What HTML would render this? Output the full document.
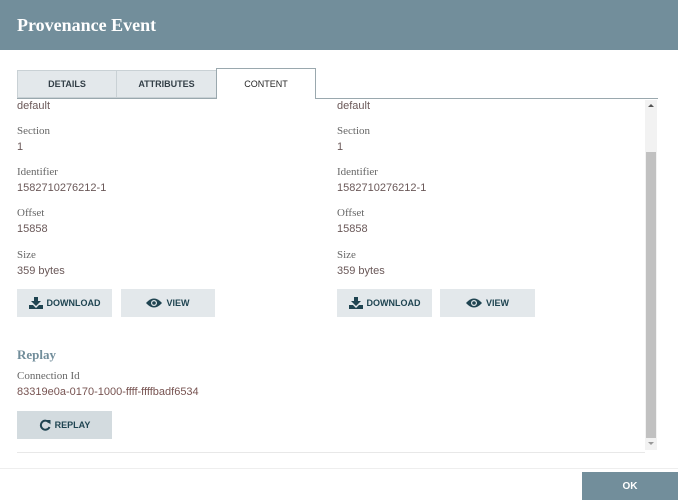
<!DOCTYPE html>
<html><head><style>
*{margin:0;padding:0;box-sizing:border-box}
body{width:678px;height:500px;background:#fff;position:relative;overflow:hidden;font-family:"Liberation Sans",sans-serif}
.hdr{position:absolute;left:0;top:0;width:678px;height:50px;background:#728e9b}
.hdr span{position:absolute;left:17px;top:15px;color:#fff;font-family:"Liberation Serif",serif;font-weight:bold;font-size:18px}
.tab{position:absolute;top:70px;height:28px;background:#e3e8eb;border:1px solid #c9d1d5;font-size:9px;font-weight:bold;color:#333f47;text-align:center;line-height:27px}
.tab.act{top:68px;height:31px;background:#fff;border:1px solid #9aa8ae;border-bottom:none;color:#262626;font-weight:normal;line-height:31px}
.line{position:absolute;left:17px;top:98px;width:641px;height:1px;background:#9aa8ae}
.t{position:absolute;font-size:11px;white-space:nowrap}
.l{font-family:"Liberation Serif",serif;color:#666}
.v{color:#6a5858}
.btn{position:absolute;height:28px;background:#e3e8eb;font-size:9px;font-weight:bold;color:#1f4451;display:flex;align-items:center;justify-content:center;gap:4px}
.sb{position:absolute;left:645px;top:100px;width:12px;height:350px;background:#f2f2f2}
.th{position:absolute;left:646px;top:152px;width:10px;height:286px;background:#c1c1c1}
</style></head><body>
<div class="hdr"><span>Provenance Event</span></div>
<div class="tab" style="left:17px;width:100px">DETAILS</div>
<div class="tab" style="left:116px;width:101px">ATTRIBUTES</div>
<div class="line"></div>
<div class="tab act" style="left:216px;width:100px">CONTENT</div>

<div class="t v" style="left:17px;top:100px">default</div>
<div class="t l" style="left:17px;top:125px">Section</div>
<div class="t v" style="left:17px;top:141px">1</div>
<div class="t l" style="left:17px;top:166px">Identifier</div>
<div class="t v" style="left:17px;top:182px">1582710276212-1</div>
<div class="t l" style="left:17px;top:207px">Offset</div>
<div class="t v" style="left:17px;top:223px">15858</div>
<div class="t l" style="left:17px;top:249px">Size</div>
<div class="t v" style="left:17px;top:265px">359 bytes</div>

<div class="t v" style="left:337px;top:100px">default</div>
<div class="t l" style="left:337px;top:125px">Section</div>
<div class="t v" style="left:337px;top:141px">1</div>
<div class="t l" style="left:337px;top:166px">Identifier</div>
<div class="t v" style="left:337px;top:182px">1582710276212-1</div>
<div class="t l" style="left:337px;top:207px">Offset</div>
<div class="t v" style="left:337px;top:223px">15858</div>
<div class="t l" style="left:337px;top:249px">Size</div>
<div class="t v" style="left:337px;top:265px">359 bytes</div>

<div class="btn" style="left:17px;top:289px;width:95px"><svg width="14" height="12" viewBox="0 0 14 12"><path d="M5 0h4v4h3l-5 5-5-5h3z" fill="#1f4451"/><path d="M0 8h4l3 3 3-3h4v4H0z" fill="#1f4451"/></svg>DOWNLOAD</div>
<div class="btn" style="left:121px;top:289px;width:94px"><svg width="16" height="10" viewBox="0 0 16 10"><path d="M0 5Q8-4 16 5Q8 14 0 5z" fill="#1f4451"/><circle cx="8" cy="5" r="3" fill="#e3e8eb"/><circle cx="8" cy="5" r="1.8" fill="#1f4451"/></svg>VIEW</div>
<div class="btn" style="left:337px;top:289px;width:95px"><svg width="14" height="12" viewBox="0 0 14 12"><path d="M5 0h4v4h3l-5 5-5-5h3z" fill="#1f4451"/><path d="M0 8h4l3 3 3-3h4v4H0z" fill="#1f4451"/></svg>DOWNLOAD</div>
<div class="btn" style="left:440px;top:289px;width:95px"><svg width="16" height="10" viewBox="0 0 16 10"><path d="M0 5Q8-4 16 5Q8 14 0 5z" fill="#1f4451"/><circle cx="8" cy="5" r="3" fill="#e3e8eb"/><circle cx="8" cy="5" r="1.8" fill="#1f4451"/></svg>VIEW</div>

<div class="t" style="left:17px;top:347px;font-family:'Liberation Serif',serif;font-weight:bold;font-size:13px;color:#728e9b">Replay</div>
<div class="t l" style="left:17px;top:370px">Connection Id</div>
<div class="t" style="left:17px;top:386px;color:#775351">83319e0a-0170-1000-ffff-ffffbadf6534</div>
<div class="btn" style="left:17px;top:411px;width:95px;background:#d3dbdf"><svg width="12" height="12" viewBox="0 0 12 12"><path d="M10 3.5A4.5 4.5 0 1 0 10.5 8" fill="none" stroke="#1f4451" stroke-width="2"/><path d="M7 1h4.5v4.5z" fill="#1f4451"/></svg>REPLAY</div>

<div style="position:absolute;left:17px;top:452px;width:628px;height:1px;background:#e8e8e8"></div>
<div class="sb"></div><div class="th"></div>
<div style="position:absolute;left:648px;top:104px;border:3px solid transparent;border-bottom:3px solid #555;border-top:none"></div>
<div style="position:absolute;left:648px;top:442px;border:3px solid transparent;border-top:3px solid #999;border-bottom:none"></div>
<div style="position:absolute;left:0;top:468px;width:678px;height:1px;background:#eee"></div>
<div class="btn" style="left:582px;top:472px;width:96px;background:#728e9b;color:#fff;font-size:10px">OK</div>
</body></html>
